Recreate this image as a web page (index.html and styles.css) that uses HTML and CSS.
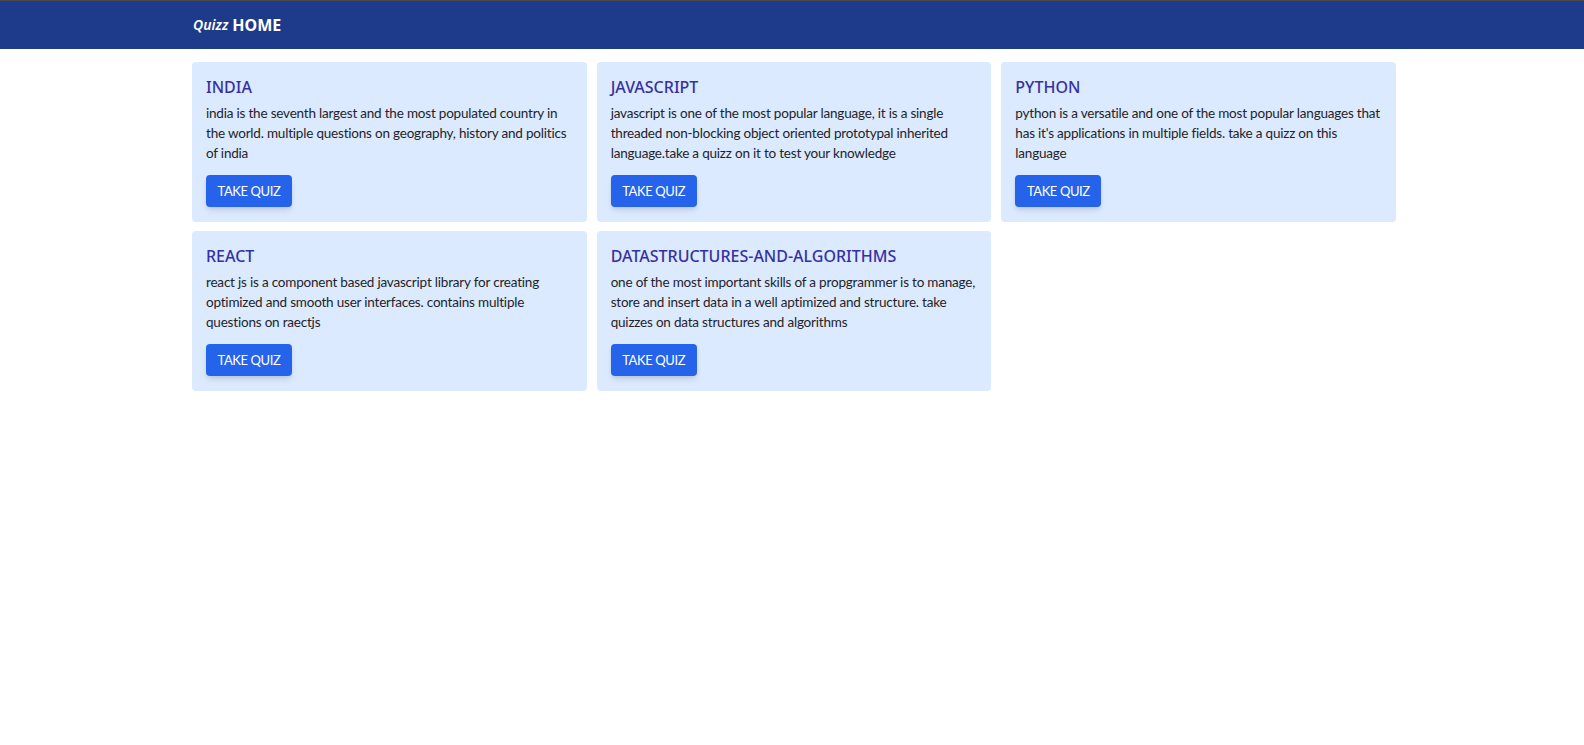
FILE: index.html
```html
<!DOCTYPE html>
<html lang="en">
<head>
<meta charset="utf-8">
<title>Quizz HOME</title>
<link rel="stylesheet" href="styles.css">
</head>
<body>
<header class="topbar">
  <div class="wrap topbar-inner">
    <span class="brand-quizz">Quizz</span>
    <span class="brand-home">HOME</span>
  </div>
</header>
<main class="wrap">
  <div class="grid">
    <section class="card">
      <h2 class="card-title">INDIA</h2>
      <p class="card-text">india is the seventh largest and the most populated country in the world. multiple questions on geography, history and politics of india</p>
      <button class="btn">TAKE QUIZ</button>
    </section>
    <section class="card">
      <h2 class="card-title">JAVASCRIPT</h2>
      <p class="card-text">javascript is one of the most popular language, it is a single threaded non-blocking object oriented prototypal inherited language.take a quizz on it to test your knowledge</p>
      <button class="btn">TAKE QUIZ</button>
    </section>
    <section class="card">
      <h2 class="card-title">PYTHON</h2>
      <p class="card-text">python is a versatile and one of the most popular languages that has it's applications in multiple fields. take a quizz on this language</p>
      <button class="btn">TAKE QUIZ</button>
    </section>
    <section class="card">
      <h2 class="card-title">REACT</h2>
      <p class="card-text">react js is a component based javascript library for creating optimized and smooth user interfaces. contains multiple questions on raectjs</p>
      <button class="btn">TAKE QUIZ</button>
    </section>
    <section class="card">
      <h2 class="card-title">DATASTRUCTURES-AND-ALGORITHMS</h2>
      <p class="card-text">one of the most important skills of a propgrammer is to manage, store and insert data in a well aptimized and structure. take quizzes on data structures and algorithms</p>
      <button class="btn">TAKE QUIZ</button>
    </section>
  </div>
</main>
</body>
</html>
```

FILE: styles.css
```css
* { box-sizing: border-box; }

html, body {
  margin: 0;
  padding: 0;
  background: #ffffff;
}

body {
  font-family: Lato, "Noto Sans", sans-serif;
  color: #1f2328;
}

.wrap {
  width: 1208px;
  margin: 0 auto;
  padding-left: 4px;
}

.topbar {
  background: #1e3a8a;
  border-top: 1px solid #4a4a4a;
  height: 49px;
  color: #ffffff;
}

.topbar-inner {
  height: 48px;
  display: flex;
  align-items: center;
  gap: 4px;
  padding-left: 5px;
}

.brand-quizz {
  font-family: "Noto Sans", sans-serif;
  font-style: italic;
  font-weight: 600;
  font-size: 14px;
  line-height: 24px;
}

.brand-home {
  font-family: "Noto Sans", sans-serif;
  font-weight: 700;
  font-size: 16px;
  line-height: 24px;
}

.grid {
  width: 1204px;
  margin-top: 13px;
  display: grid;
  grid-template-columns: repeat(3, 1fr);
  column-gap: 10px;
  row-gap: 9px;
}

.card {
  background: #dbeafe;
  border-radius: 4px;
  padding: 14px 12px 15px 14px;
}

.card-title {
  margin: 0 0 5px 0;
  font-family: "Noto Sans", sans-serif;
  font-size: 16px;
  line-height: 22px;
  font-weight: 500;
  color: #3730a3;
}

.card-text {
  margin: 0 0 12px 0;
  font-size: 13.5px;
  letter-spacing: -0.2px;
  line-height: 20px;
}

.btn {
  display: block;
  width: 86px;
  height: 32px;
  padding: 0;
  border: none;
  border-radius: 4px;
  background: #2563eb;
  color: #ffffff;
  font-family: Lato, sans-serif;
  font-size: 13px;
  letter-spacing: -0.4px;
  text-align: center;
  box-shadow: 0 4px 6px -1px rgba(0, 0, 0, 0.12), 0 2px 4px -2px rgba(0, 0, 0, 0.1);
}
```
